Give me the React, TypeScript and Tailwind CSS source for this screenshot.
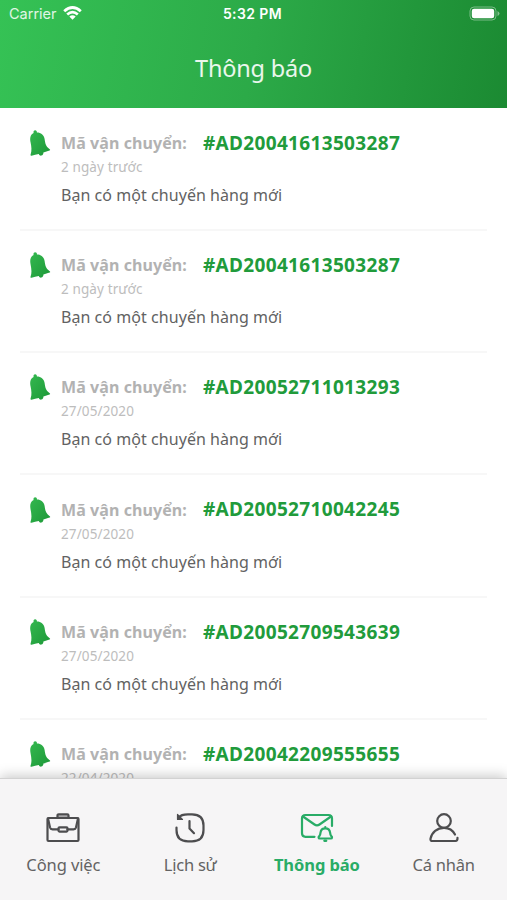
import type { ReactNode } from 'react';

const items = [
  { code: '#AD20041613503287', time: '2 ngày trước' },
  { code: '#AD20041613503287', time: '2 ngày trước' },
  { code: '#AD20052711013293', time: '27/05/2020' },
  { code: '#AD20052710042245', time: '27/05/2020' },
  { code: '#AD20052709543639', time: '27/05/2020' },
  { code: '#AD20042209555655', time: '22/04/2020' },
];

function Bell() {
  return (
    <svg width="22" height="28" viewBox="0 0 22 28" className="shrink-0">
      <defs>
        <linearGradient id="bell" x1="0" y1="0" x2="1" y2="1">
          <stop offset="0" stopColor="#34b84f" />
          <stop offset="1" stopColor="#1d9838" />
        </linearGradient>
      </defs>
      <path
        fill="url(#bell)"
        d="M4.600 3.900C4.200 2.500 4.900 1.300 6.200 1.300C7.400 1.300 8.100 2.300 7.900 3.600C11.700 3.500 15 6.200 15.600 10C16.200 14 16.500 17.200 20.700 20.200C21.400 20.700 21.300 21.300 20.500 21.600C18.500 22.400 16.500 23.100 14.400 23.600C14.500 25.200 13.700 26.400 12.300 26.600C11.100 26.800 10.200 26.200 9.800 25C7.400 25.400 4.900 26 2.500 26.700C1.600 26.900 1.300 26.400 1.600 25.600C3 21.500 2.400 17.500 1.600 13.500C.7 9 1.300 5.500 4.600 3.900Z"
      />
    </svg>
  );
}

function Icon({ children }: { children: ReactNode }) {
  return (
    <svg width="36" height="32" viewBox="0 0 36 32" fill="none" stroke="currentColor" strokeWidth="2.200" strokeLinecap="round" strokeLinejoin="round">
      {children}
    </svg>
  );
}

const tabs = [
  {
    label: 'Công việc',
    style: 'text-[#636363] tracking-[-0.1px]',
    tone: 'text-[#4d4d4f]',
    icon: (
      <Icon>
        <rect x="2.500" y="6" width="31" height="23" rx="1" />
        <path d="M12.500 6V3.500Q12.500 2.300 13.700 2.300H22.300Q23.500 2.300 23.500 3.500V6" />
        <path d="M12.500 4.300H23.500" strokeWidth="1.500" strokeOpacity=".45" />
        <path d="M3 6.500L5 15.500Q5.500 17.300 7.500 17.300H13.500M22.500 17.300H28.500Q30.500 17.300 31 15.500L33 6.500" />
        <rect x="13.500" y="15.300" width="9" height="4.300" rx="1" />
      </Icon>
    ),
  },
  {
    label: 'Lịch sử',
    style: 'text-[#636363] tracking-[-0.22px]',
    tone: 'text-[#4d4d4f]',
    icon: (
      <Icon>
        <path d="M7 5.300C8.500 3 11.500 2.300 16 2.300H20C28 2.300 31.500 5.800 31.500 13.500V18C31.500 25.700 28 29.300 20 29.300H16C8 29.300 4.500 25.700 4.500 18V15.500" />
        <path d="M5.500 2.500V7.500H10.500Z" fill="currentColor" strokeWidth="1.200" />
        <path d="M17.500 9V16.500L22 21.200" />
      </Icon>
    ),
  },
  {
    label: 'Thông báo',
    style: 'font-bold text-[#29ac67] tracking-[-0.08px]',
    tone: 'text-[#29ac67]',
    icon: (
      <Icon>
        <path d="M15.500 24.800H6.500Q3 24.800 3 21.300V6.500Q3 3 6.500 3H29.500Q33 3 33 6.500V14" />
        <path d="M4 4.500L15.500 12.500Q18 14.200 20.500 12.500L32 4.500" />
        <path d="M26.300 15V16.300M20.700 26.500C19.300 26.500 19.300 25 20.300 24.200C21.300 23.200 21.400 22 21.500 20.700C21.800 18 23.600 16.300 26.300 16.300C29 16.300 30.800 18 31.100 20.700C31.200 22 31.300 23.200 32.300 24.200C33.300 25 33.300 26.500 31.900 26.500ZM25.300 28.800H27.300" />
      </Icon>
    ),
  },
  {
    label: 'Cá nhân',
    style: 'text-[#636363] tracking-[-0.22px]',
    tone: 'text-[#4d4d4f]',
    icon: (
      <Icon>
        <circle cx="18" cy="9" r="6.800" />
        <path d="M29 22.500C27 18.500 22.800 15.800 18 15.800C11 15.800 5.800 20.500 4.500 26.700C4.200 28.200 5.100 29 6.400 29H29.500Q31.700 29 31.500 25.800" />
      </Icon>
    ),
  },
];

export default function App() {
  return (
    <div className="flex h-[900px] w-[507px] flex-col overflow-hidden bg-white font-['Noto_Sans',sans-serif]">
      <header className="h-[108px] shrink-0 bg-[linear-gradient(100deg,#35c255_0%,#2caa48_50%,#1b8a32_100%)] text-white">
        <div className="grid h-7 grid-cols-3 items-center pl-[9px] pr-[7px] font-[Inter,sans-serif]">
          <div className="flex items-center gap-1.5">
            <span className="text-[14.500px] text-white/85">Carrier</span>
            <svg width="19" height="14" viewBox="0 0 19 14" fill="none" stroke="white" strokeWidth="2.800" className="-mt-0.5">
              <path d="M1.200 5.200Q9.500 -2.200 17.800 5.200M4.200 8.500Q9.500 3.800 14.800 8.500" />
              <path d="M6.300 10.600Q9.500 7.900 12.700 10.600L9.500 13.800Z" fill="white" stroke="none" />
            </svg>
          </div>
          <span className="-ml-1 -mt-px whitespace-nowrap text-center text-[14px] font-semibold tracking-[0.4px]">5:32 PM</span>
          <svg width="31" height="15" viewBox="0 0 31 15" className="-mt-px justify-self-end">
            <rect x="1" y="1" width="26" height="13" rx="4" fill="none" stroke="white" strokeOpacity=".4" />
            <rect x="2.800" y="2.800" width="22.400" height="9.400" rx="2.300" fill="white" />
            <path d="M28.500 5V10Q30.500 9 30.500 7.500T28.500 5Z" fill="white" fillOpacity=".45" />
          </svg>
        </div>
        <h1 className="pt-[23px] text-center text-[23.500px] font-normal leading-[34px] tracking-[-0.2px] text-white/90">Thông báo</h1>
      </header>

      <main className="min-h-0 flex-1 overflow-hidden px-5">
        {items.map((item, index) => (
          <article key={index} className="h-[122.200px]">
            <div className="flex h-[123px] border-b-2 border-[#f7f7f7] pl-[9px] pt-[21px]">
              <Bell />
              <div className="ml-2.5">
                <div className="flex h-7 items-center">
                  <span className="w-[142px] whitespace-nowrap text-[16px] font-bold tracking-[0.08px] text-[#b2b2b2]">Mã vận chuyển:</span>
                  <span className="whitespace-nowrap text-[19px] font-bold tracking-[0.33px] text-[#219b3b]">{item.code}</span>
                </div>
                <p className="h-5 whitespace-nowrap text-[13.500px] leading-5 tracking-[0.12px] text-[#bdbdbd]">{item.time}</p>
                <p className="pt-1.5 whitespace-nowrap text-[16px] leading-6 tracking-[0.05px] text-[#626262]">Bạn có một chuyến hàng mới</p>
              </div>
            </div>
          </article>
        ))}
      </main>

      <nav className="relative grid h-[122px] shrink-0 grid-cols-4 border-t border-[#d2d2d2] bg-[#f6f5f6] shadow-[0_-2px_12px_rgba(0,0,0,0.22)]">
        {tabs.map((tab) => (
          <button key={tab.label} className="flex flex-col items-center pt-[33px]">
            <span className={tab.tone}>{tab.icon}</span>
            <span className={`mt-[9px] whitespace-nowrap text-[16.500px] leading-6 ${tab.style}`}>{tab.label}</span>
          </button>
        ))}
      </nav>
    </div>
  );
}
